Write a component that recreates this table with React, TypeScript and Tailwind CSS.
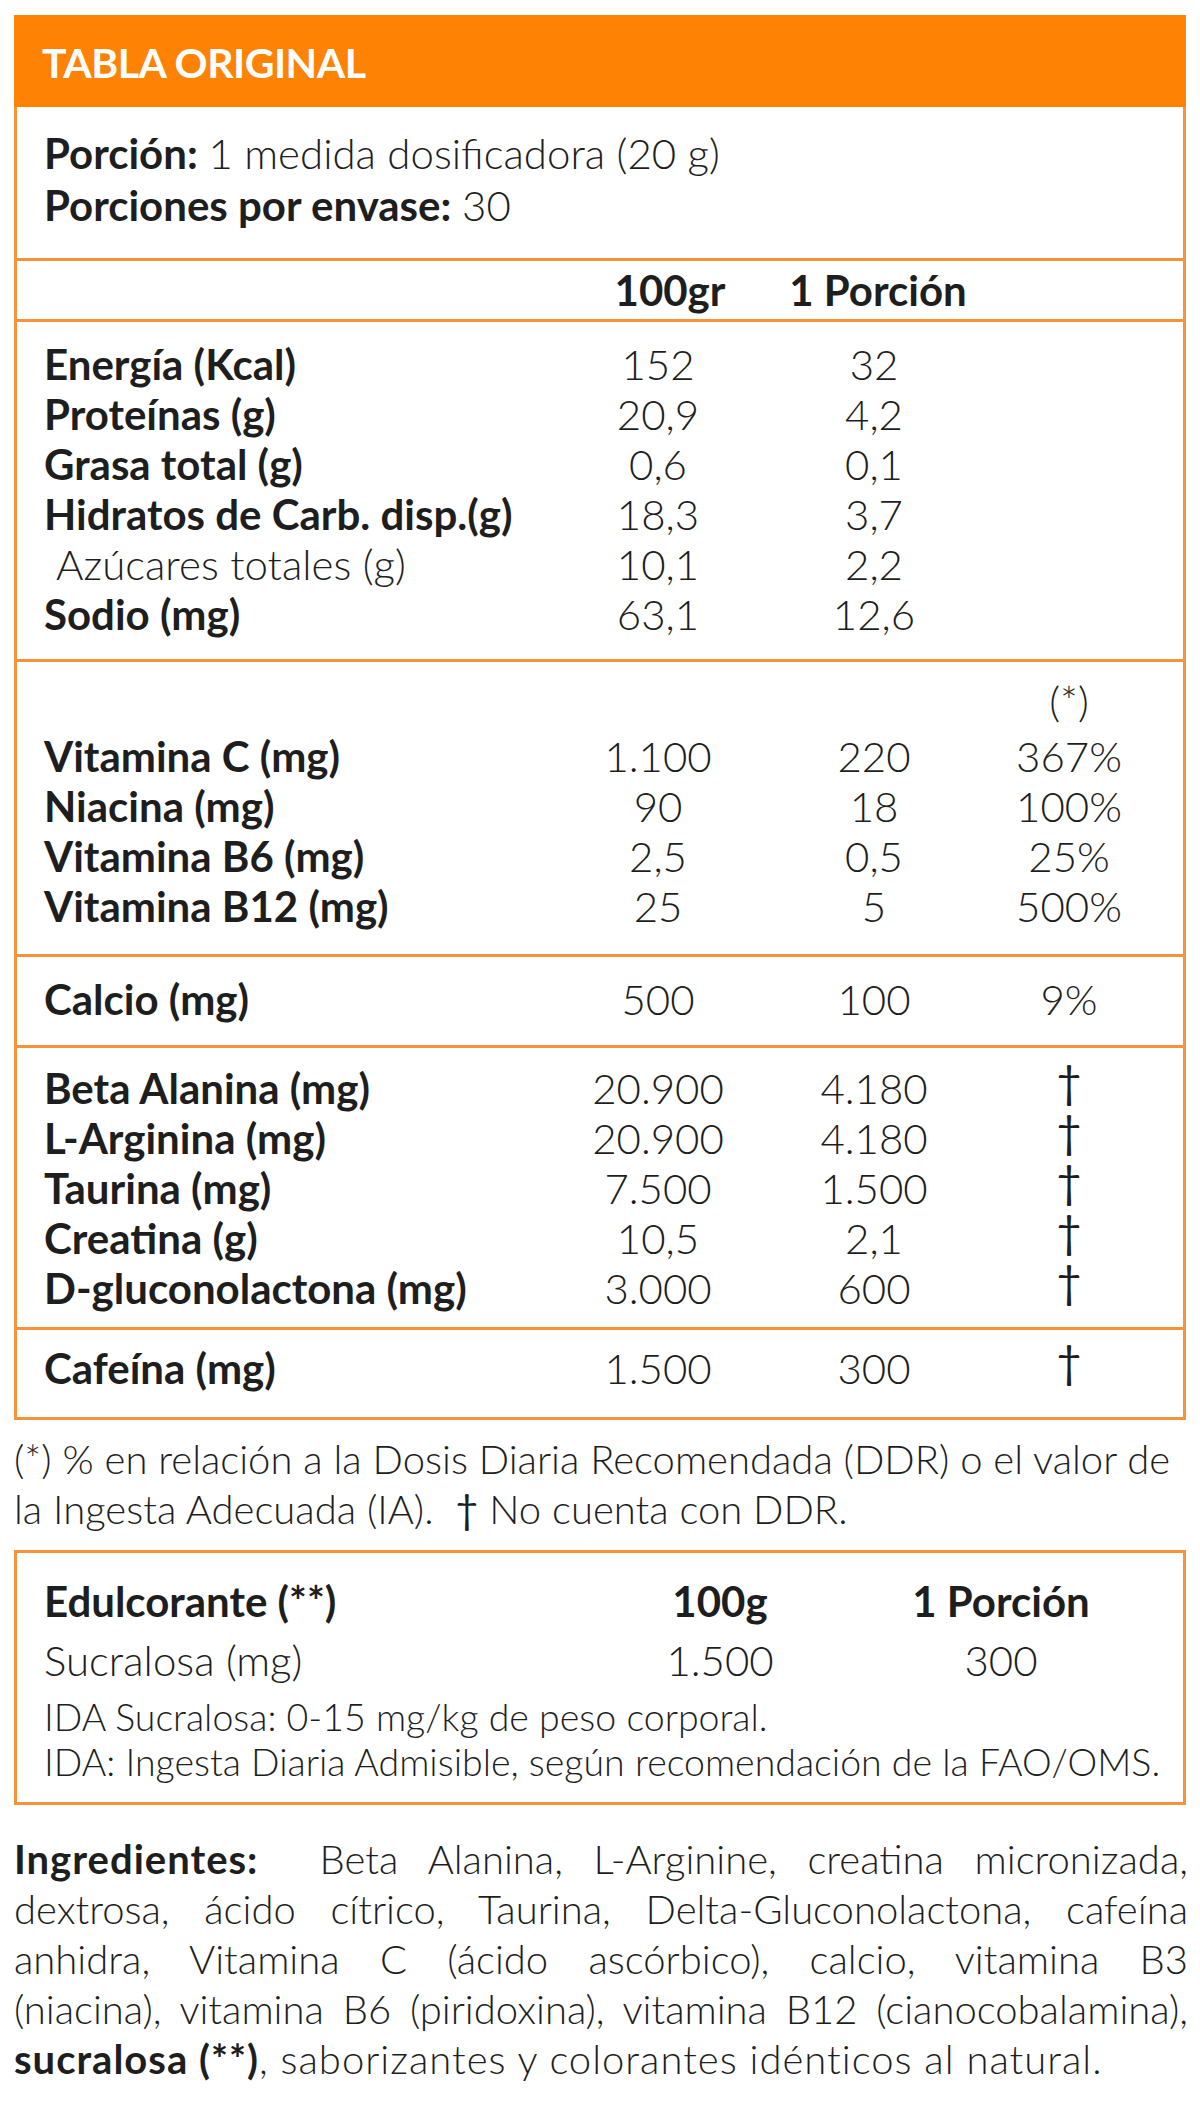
import React from "react";

type Row = { label: string; a: string; b: string; c?: string; indent?: boolean; dagger?: boolean };

const ROW = "grid grid-cols-[528px_172px_260px_130px] h-[50px] leading-[50px] pl-[27px]";

function DataRow({ r }: { r: Row }) {
  return (
    <div className={ROW}>
      <div className={r.indent ? "font-light pl-[12px]" : "font-bold"}>{r.label}</div>
      <div className="text-center font-light">{r.a}</div>
      <div className="text-center font-light">{r.b}</div>
      <div className="text-center font-light">
        {r.dagger ? <span className="relative top-[-7px] font-normal text-[44px]">†</span> : r.c}
      </div>
    </div>
  );
}

const macro: Row[] = [
  { label: "Energía (Kcal)", a: "152", b: "32" },
  { label: "Proteínas (g)", a: "20,9", b: "4,2" },
  { label: "Grasa total (g)", a: "0,6", b: "0,1" },
  { label: "Hidratos de Carb. disp.(g)", a: "18,3", b: "3,7" },
  { label: "Azúcares totales (g)", a: "10,1", b: "2,2", indent: true },
  { label: "Sodio (mg)", a: "63,1", b: "12,6" },
];

const vit: Row[] = [
  { label: "Vitamina C (mg)", a: "1.100", b: "220", c: "367%" },
  { label: "Niacina (mg)", a: "90", b: "18", c: "100%" },
  { label: "Vitamina B6 (mg)", a: "2,5", b: "0,5", c: "25%" },
  { label: "Vitamina B12 (mg)", a: "25", b: "5", c: "500%" },
];

const amino: Row[] = [
  { label: "Beta Alanina (mg)", a: "20.900", b: "4.180", dagger: true },
  { label: "L-Arginina (mg)", a: "20.900", b: "4.180", dagger: true },
  { label: "Taurina (mg)", a: "7.500", b: "1.500", dagger: true },
  { label: "Creatina (g)", a: "10,5", b: "2,1", dagger: true },
  { label: "D-gluconolactona (mg)", a: "3.000", b: "600", dagger: true },
];

const JL = "text-justify [text-align-last:justify]";

export default function App() {
  return (
    <div className="w-[1200px] h-[2110px] bg-white pl-[14px] pt-[15px] font-['Lato',sans-serif] text-[42px] text-[#1e1e1e] overflow-hidden">
      <div className="w-[1172px] border-[3px] border-[#f5923a]">
        <div className="bg-[#fe8204] h-[92px] -mt-[3px] -mx-[3px] pl-[28px] pt-[3px] flex items-center text-white font-bold text-[41px] tracking-[-0.5px]">
          TABLA ORIGINAL
        </div>
        <div className="pl-[27px] pt-[20px] pb-[27px] leading-[52px]">
          <div><span className="font-bold">Porción:</span> <span className="font-light">1 medida dosificadora (20 g)</span></div>
          <div><span className="font-bold">Porciones por envase:</span> <span className="font-light">30</span></div>
        </div>
        <div className="border-t-[3px] border-[#f5923a] pt-[4px] pb-[4px]">
          <div className={ROW + " font-bold"}>
            <div></div>
            <div className="text-center pl-[24px]">100gr</div>
            <div className="text-center pl-[8px]">1 Porción</div>
            <div></div>
          </div>
        </div>
        <div className="border-t-[3px] border-[#f5923a] pt-[17px] pb-[20px]">
          {macro.map((r) => <DataRow key={r.label} r={r} />)}
        </div>
        <div className="border-t-[3px] border-[#f5923a] pt-[14px] pb-[23px]">
          <div className={ROW + " h-[55px]"}>
            <div></div><div></div><div></div>
            <div className="text-center font-light">(*)</div>
          </div>
          {vit.map((r) => <DataRow key={r.label} r={r} />)}
        </div>
        <div className="border-t-[3px] border-[#f5923a] pt-[17px] pb-[21px]">
          <DataRow r={{ label: "Calcio (mg)", a: "500", b: "100", c: "9%" }} />
        </div>
        <div className="border-t-[3px] border-[#f5923a] pt-[15px] pb-[14px]">
          {amino.map((r) => <DataRow key={r.label} r={r} />)}
        </div>
        <div className="border-t-[3px] border-[#f5923a] pt-[13px] pb-[24px]">
          <DataRow r={{ label: "Cafeína (mg)", a: "1.500", b: "300", dagger: true }} />
        </div>
      </div>

      <div className="mt-[14px] leading-[50px] text-[40px] font-light whitespace-nowrap">
        <div>(*) % en relación a la Dosis Diaria Recomendada (DDR) o el valor de</div>
        <div>la Ingesta Adecuada (IA).&nbsp; <span className="font-normal">†</span> No cuenta con DDR.</div>
      </div>

      <div className="mt-[16px] w-[1172px] border-[3px] border-[#f5923a] pl-[27px] pt-[23px] pb-[18px]">
        <div className="grid grid-cols-[576px_200px_362px] h-[50px] leading-[50px] font-bold">
          <div>Edulcorante (**)</div>
          <div className="text-center">100g</div>
          <div className="text-center">1 Porción</div>
        </div>
        <div className="grid grid-cols-[576px_200px_362px] h-[50px] leading-[50px] mt-[9px] font-light">
          <div>Sucralosa (mg)</div>
          <div className="text-center">1.500</div>
          <div className="text-center">300</div>
        </div>
        <div className="mt-[9px] leading-[45px] text-[37.5px] font-light whitespace-nowrap">
          <div>IDA Sucralosa: 0-15 mg/kg de peso corporal.</div>
          <div>IDA: Ingesta Diaria Admisible, según recomendación de la FAO/OMS.</div>
        </div>
      </div>

      <div className="mt-[29px] w-[1174px] leading-[50px] text-[40px] font-light">
        <div className={JL}><span className="font-bold tracking-[1px]">Ingredientes:</span>&nbsp; Beta Alanina, L-Arginine, creatina micronizada,</div>
        <div className={JL}>dextrosa, ácido cítrico, Taurina, Delta-Gluconolactona, cafeína</div>
        <div className={JL}>anhidra, Vitamina C (ácido ascórbico), calcio, vitamina B3</div>
        <div className={JL}>(niacina), vitamina B6 (piridoxina), vitamina B12 (cianocobalamina),</div>
        <div className="tracking-[1px]"><span className="font-bold">sucralosa (**)</span>, saborizantes y colorantes idénticos al natural.</div>
      </div>
    </div>
  );
}
